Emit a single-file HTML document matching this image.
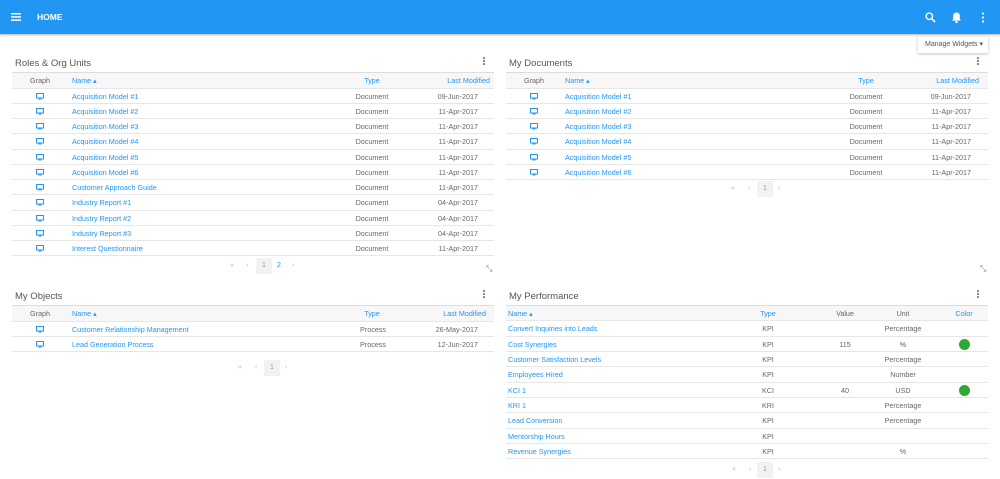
<!DOCTYPE html>
<html><head><meta charset="utf-8"><style>
*{box-sizing:border-box;margin:0;padding:0}
body{width:1000px;height:479px;background:#fff;font-family:"Liberation Sans",sans-serif;position:relative;overflow:hidden;font-size:7.2px;color:#666}
.hdr{position:absolute;left:0;top:0;width:1000px;height:34px;background:#2196f3;box-shadow:0 1px 2px rgba(0,0,0,.3)}
.w{position:absolute}
.title{position:absolute;left:3px;top:3px;font-size:9.5px;color:#555}
.dots{position:absolute;top:2px;width:3px}
.dots i{display:block;width:1.6px;height:1.6px;background:#777;border-radius:50%;margin:0 0 1.4px}
.tb{position:absolute;left:0;top:17px;border-top:1.5px solid #ddd}
.r{position:relative;height:15.25px;border-bottom:1px solid #e6e6e6}
.p .r{height:15.35px}
.h{background:#f7f7f7;height:15.5px}
.r span{position:absolute;top:4px;white-space:nowrap;line-height:8px}
.a{color:#2196f3}
.c{transform:translateX(-50%)}
.rt{transform:translateX(-100%)}
.ic{position:absolute;top:4px}
.pg{position:absolute;font-size:7px;color:#bbb}
.pg span{position:absolute;top:4px}
.pg b{position:absolute;top:0;width:16px;height:16px;background:#f2f2f2;font-weight:normal;color:#999;text-align:center;line-height:16px}
.dot{position:absolute;top:2.5px;width:11px;height:11px;border-radius:50%;background:#2ea836}
.resz{position:absolute;color:#777;font-size:8px}
</style></head><body>
<div class="hdr">
<svg style="position:absolute;left:11px;top:13px" width="10" height="8"><rect y="0" width="10" height="1.5" fill="#fff"/><rect y="3.2" width="10" height="1.5" fill="#fff"/><rect y="6.4" width="10" height="1.5" fill="#fff"/></svg>
<div style="position:absolute;left:37px;top:12px;color:#fff;font-weight:bold;font-size:8.5px">HOME</div>
<svg style="position:absolute;left:925px;top:12px" width="11" height="11"><circle cx="4.3" cy="4.3" r="3.2" stroke="#fff" stroke-width="1.4" fill="none"/><line x1="6.7" y1="6.7" x2="10" y2="10" stroke="#fff" stroke-width="1.6"/></svg>
<svg style="position:absolute;left:951px;top:11px" width="11" height="13"><path d="M5.5 1.5c-2 0-3.3 1.5-3.3 3.6v3L1 9.6h9L8.8 8.1v-3C8.8 3 7.5 1.5 5.5 1.5z" fill="#fff"/><circle cx="5.5" cy="11" r="1.2" fill="#fff"/></svg>
<svg style="position:absolute;left:981px;top:12px" width="4" height="11"><circle cx="2" cy="1.5" r="1.1" fill="#fff"/><circle cx="2" cy="5.5" r="1.1" fill="#fff"/><circle cx="2" cy="9.5" r="1.1" fill="#fff"/></svg>
</div>
<div style="position:absolute;left:918px;top:37px;width:70px;height:16px;background:#fff;box-shadow:0 1px 3px rgba(0,0,0,.25);font-size:7px;color:#555;line-height:16px;padding-left:7px">Manage Widgets ▾</div>

<!-- Roles & Org Units -->
<div class="w" style="left:12px;top:55px;width:482px">
<div class="title">Roles &amp; Org Units</div>
<div class="dots" style="left:471px"><i></i><i></i><i></i></div>
<div class="tb" style="width:482px">
<div class="r h"><span class="c" style="left:28px;color:#666">Graph</span><span class="a" style="left:60px">Name ▴</span><span class="a c" style="left:360px">Type</span><span class="a rt" style="left:478px">Last Modified</span></div>
<div class="r"><svg class="ic" style="left:24px" width="8" height="7"><rect x=".5" y=".5" width="7" height="4.5" fill="none" stroke="#2196f3"/><rect x="2.5" y="5.5" width="3" height="1" fill="#2196f3"/></svg><span class="a" style="left:60px">Acquisition Model #1</span><span class="c" style="left:360px">Document</span><span class="rt" style="left:466px">09-Jun-2017</span></div>
<div class="r"><svg class="ic" style="left:24px" width="8" height="7"><rect x=".5" y=".5" width="7" height="4.5" fill="none" stroke="#2196f3"/><rect x="2.5" y="5.5" width="3" height="1" fill="#2196f3"/></svg><span class="a" style="left:60px">Acquisition Model #2</span><span class="c" style="left:360px">Document</span><span class="rt" style="left:466px">11-Apr-2017</span></div>
<div class="r"><svg class="ic" style="left:24px" width="8" height="7"><rect x=".5" y=".5" width="7" height="4.5" fill="none" stroke="#2196f3"/><rect x="2.5" y="5.5" width="3" height="1" fill="#2196f3"/></svg><span class="a" style="left:60px">Acquisition Model #3</span><span class="c" style="left:360px">Document</span><span class="rt" style="left:466px">11-Apr-2017</span></div>
<div class="r"><svg class="ic" style="left:24px" width="8" height="7"><rect x=".5" y=".5" width="7" height="4.5" fill="none" stroke="#2196f3"/><rect x="2.5" y="5.5" width="3" height="1" fill="#2196f3"/></svg><span class="a" style="left:60px">Acquisition Model #4</span><span class="c" style="left:360px">Document</span><span class="rt" style="left:466px">11-Apr-2017</span></div>
<div class="r"><svg class="ic" style="left:24px" width="8" height="7"><rect x=".5" y=".5" width="7" height="4.5" fill="none" stroke="#2196f3"/><rect x="2.5" y="5.5" width="3" height="1" fill="#2196f3"/></svg><span class="a" style="left:60px">Acquisition Model #5</span><span class="c" style="left:360px">Document</span><span class="rt" style="left:466px">11-Apr-2017</span></div>
<div class="r"><svg class="ic" style="left:24px" width="8" height="7"><rect x=".5" y=".5" width="7" height="4.5" fill="none" stroke="#2196f3"/><rect x="2.5" y="5.5" width="3" height="1" fill="#2196f3"/></svg><span class="a" style="left:60px">Acquisition Model #6</span><span class="c" style="left:360px">Document</span><span class="rt" style="left:466px">11-Apr-2017</span></div>
<div class="r"><svg class="ic" style="left:24px" width="8" height="7"><rect x=".5" y=".5" width="7" height="4.5" fill="none" stroke="#2196f3"/><rect x="2.5" y="5.5" width="3" height="1" fill="#2196f3"/></svg><span class="a" style="left:60px">Customer Approach Guide</span><span class="c" style="left:360px">Document</span><span class="rt" style="left:466px">11-Apr-2017</span></div>
<div class="r"><svg class="ic" style="left:24px" width="8" height="7"><rect x=".5" y=".5" width="7" height="4.5" fill="none" stroke="#2196f3"/><rect x="2.5" y="5.5" width="3" height="1" fill="#2196f3"/></svg><span class="a" style="left:60px">Industry Report #1</span><span class="c" style="left:360px">Document</span><span class="rt" style="left:466px">04-Apr-2017</span></div>
<div class="r"><svg class="ic" style="left:24px" width="8" height="7"><rect x=".5" y=".5" width="7" height="4.5" fill="none" stroke="#2196f3"/><rect x="2.5" y="5.5" width="3" height="1" fill="#2196f3"/></svg><span class="a" style="left:60px">Industry Report #2</span><span class="c" style="left:360px">Document</span><span class="rt" style="left:466px">04-Apr-2017</span></div>
<div class="r"><svg class="ic" style="left:24px" width="8" height="7"><rect x=".5" y=".5" width="7" height="4.5" fill="none" stroke="#2196f3"/><rect x="2.5" y="5.5" width="3" height="1" fill="#2196f3"/></svg><span class="a" style="left:60px">Industry Report #3</span><span class="c" style="left:360px">Document</span><span class="rt" style="left:466px">04-Apr-2017</span></div>
<div class="r"><svg class="ic" style="left:24px" width="8" height="7"><rect x=".5" y=".5" width="7" height="4.5" fill="none" stroke="#2196f3"/><rect x="2.5" y="5.5" width="3" height="1" fill="#2196f3"/></svg><span class="a" style="left:60px">Interest Questionnaire</span><span class="c" style="left:360px">Document</span><span class="rt" style="left:466px">11-Apr-2017</span></div>
</div></div>
<div class="pg" style="left:0;top:258px"><span style="left:230px">«</span><span style="left:246px">‹</span><b style="left:256px">1</b><span style="left:277px;color:#2196f3">2</span><span style="left:292px">›</span></div>
<div class="resz" style="left:486px;top:264px">⤡</div>

<!-- My Documents -->
<div class="w" style="left:506px;top:55px;width:482px">
<div class="title">My Documents</div>
<div class="dots" style="left:471px"><i></i><i></i><i></i></div>
<div class="tb" style="width:482px">
<div class="r h"><span class="c" style="left:28px;color:#666">Graph</span><span class="a" style="left:59px">Name ▴</span><span class="a c" style="left:360px">Type</span><span class="a rt" style="left:473px">Last Modified</span></div>
<div class="r"><svg class="ic" style="left:24px" width="8" height="7"><rect x=".5" y=".5" width="7" height="4.5" fill="none" stroke="#2196f3"/><rect x="2.5" y="5.5" width="3" height="1" fill="#2196f3"/></svg><span class="a" style="left:59px">Acquisition Model #1</span><span class="c" style="left:360px">Document</span><span class="rt" style="left:465px">09-Jun-2017</span></div>
<div class="r"><svg class="ic" style="left:24px" width="8" height="7"><rect x=".5" y=".5" width="7" height="4.5" fill="none" stroke="#2196f3"/><rect x="2.5" y="5.5" width="3" height="1" fill="#2196f3"/></svg><span class="a" style="left:59px">Acquisition Model #2</span><span class="c" style="left:360px">Document</span><span class="rt" style="left:465px">11-Apr-2017</span></div>
<div class="r"><svg class="ic" style="left:24px" width="8" height="7"><rect x=".5" y=".5" width="7" height="4.5" fill="none" stroke="#2196f3"/><rect x="2.5" y="5.5" width="3" height="1" fill="#2196f3"/></svg><span class="a" style="left:59px">Acquisition Model #3</span><span class="c" style="left:360px">Document</span><span class="rt" style="left:465px">11-Apr-2017</span></div>
<div class="r"><svg class="ic" style="left:24px" width="8" height="7"><rect x=".5" y=".5" width="7" height="4.5" fill="none" stroke="#2196f3"/><rect x="2.5" y="5.5" width="3" height="1" fill="#2196f3"/></svg><span class="a" style="left:59px">Acquisition Model #4</span><span class="c" style="left:360px">Document</span><span class="rt" style="left:465px">11-Apr-2017</span></div>
<div class="r"><svg class="ic" style="left:24px" width="8" height="7"><rect x=".5" y=".5" width="7" height="4.5" fill="none" stroke="#2196f3"/><rect x="2.5" y="5.5" width="3" height="1" fill="#2196f3"/></svg><span class="a" style="left:59px">Acquisition Model #5</span><span class="c" style="left:360px">Document</span><span class="rt" style="left:465px">11-Apr-2017</span></div>
<div class="r"><svg class="ic" style="left:24px" width="8" height="7"><rect x=".5" y=".5" width="7" height="4.5" fill="none" stroke="#2196f3"/><rect x="2.5" y="5.5" width="3" height="1" fill="#2196f3"/></svg><span class="a" style="left:59px">Acquisition Model #6</span><span class="c" style="left:360px">Document</span><span class="rt" style="left:465px">11-Apr-2017</span></div>
</div></div>
<div class="pg" style="left:0;top:181px"><span style="left:731px">«</span><span style="left:748px">‹</span><b style="left:757px">1</b><span style="left:778px">›</span></div>
<div class="resz" style="left:980px;top:264px">⤡</div>

<!-- My Objects -->
<div class="w" style="left:12px;top:288px;width:482px">
<div class="title">My Objects</div>
<div class="dots" style="left:471px"><i></i><i></i><i></i></div>
<div class="tb" style="width:482px">
<div class="r h"><span class="c" style="left:28px;color:#666">Graph</span><span class="a" style="left:60px">Name ▴</span><span class="a c" style="left:360px">Type</span><span class="a rt" style="left:474px">Last Modified</span></div>
<div class="r"><svg class="ic" style="left:24px" width="8" height="7"><rect x=".5" y=".5" width="7" height="4.5" fill="none" stroke="#2196f3"/><rect x="2.5" y="5.5" width="3" height="1" fill="#2196f3"/></svg><span class="a" style="left:60px">Customer Relationship Management</span><span class="c" style="left:361px">Process</span><span class="rt" style="left:466px">26-May-2017</span></div>
<div class="r"><svg class="ic" style="left:24px" width="8" height="7"><rect x=".5" y=".5" width="7" height="4.5" fill="none" stroke="#2196f3"/><rect x="2.5" y="5.5" width="3" height="1" fill="#2196f3"/></svg><span class="a" style="left:60px">Lead Generation Process</span><span class="c" style="left:361px">Process</span><span class="rt" style="left:466px">12-Jun-2017</span></div>
</div></div>
<div class="pg" style="left:0;top:360px"><span style="left:238px">«</span><span style="left:255px">‹</span><b style="left:264px">1</b><span style="left:285px">›</span></div>

<!-- My Performance -->
<div class="w p" style="left:506px;top:288px;width:482px">
<div class="title">My Performance</div>
<div class="dots" style="left:471px"><i></i><i></i><i></i></div>
<div class="tb" style="width:482px">
<div class="r h"><span class="a" style="left:2px">Name ▴</span><span class="a c" style="left:262px">Type</span><span class="c" style="left:339px">Value</span><span class="c" style="left:397px">Unit</span><span class="a c" style="left:458px">Color</span></div>
<div class="r"><span class="a" style="left:2px">Convert Inquiries into Leads</span><span class="c" style="left:262px">KPI</span><span class="c" style="left:397px">Percentage</span></div>
<div class="r"><span class="a" style="left:2px">Cost Synergies</span><span class="c" style="left:262px">KPI</span><span class="c" style="left:339px">115</span><span class="c" style="left:397px">%</span><i class="dot" style="left:453px"></i></div>
<div class="r"><span class="a" style="left:2px">Customer Satisfaction Levels</span><span class="c" style="left:262px">KPI</span><span class="c" style="left:397px">Percentage</span></div>
<div class="r"><span class="a" style="left:2px">Employees Hired</span><span class="c" style="left:262px">KPI</span><span class="c" style="left:397px">Number</span></div>
<div class="r"><span class="a" style="left:2px">KCI 1</span><span class="c" style="left:262px">KCI</span><span class="c" style="left:339px">40</span><span class="c" style="left:397px">USD</span><i class="dot" style="left:453px"></i></div>
<div class="r"><span class="a" style="left:2px">KRI 1</span><span class="c" style="left:262px">KRI</span><span class="c" style="left:397px">Percentage</span></div>
<div class="r"><span class="a" style="left:2px">Lead Conversion</span><span class="c" style="left:262px">KPI</span><span class="c" style="left:397px">Percentage</span></div>
<div class="r"><span class="a" style="left:2px">Mentorship Hours</span><span class="c" style="left:262px">KPI</span></div>
<div class="r"><span class="a" style="left:2px">Revenue Synergies</span><span class="c" style="left:262px">KPI</span><span class="c" style="left:397px">%</span></div>
</div></div>
<div class="pg" style="left:0;top:462px"><span style="left:732px">«</span><span style="left:749px">‹</span><b style="left:757px">1</b><span style="left:778px">›</span></div>
</body></html>
